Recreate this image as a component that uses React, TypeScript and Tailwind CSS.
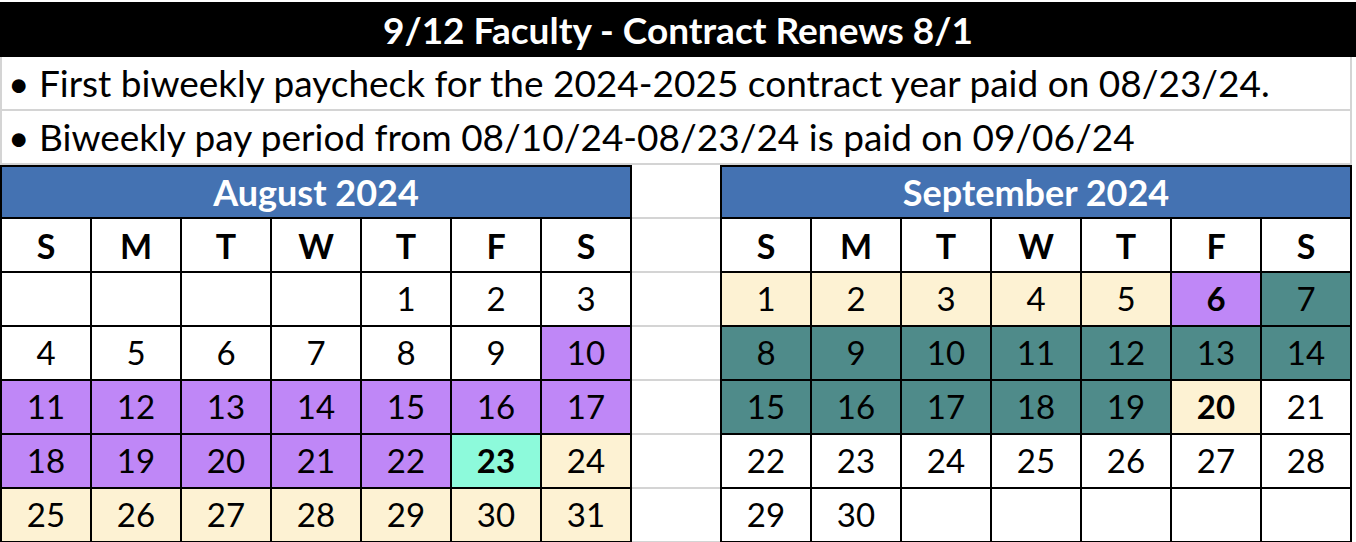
import React from "react";

type Day = { n: number | null; bg?: string; bold?: boolean };

const PURPLE = "bg-[#bf87f7]";
const CREAM = "bg-[#fdf2d3]";
const MINT = "bg-[#8dfadb]";
const TEAL = "bg-[#4f8b8a]";

const augustDays = (): Day[] => {
  const days: Day[] = [null, null, null, null].map(() => ({ n: null }));
  for (let d = 1; d <= 31; d++) {
    let bg: string | undefined;
    let bold = false;
    if (d >= 10 && d <= 22) bg = PURPLE;
    if (d === 23) {
      bg = MINT;
      bold = true;
    }
    if (d >= 24) bg = CREAM;
    days.push({ n: d, bg, bold });
  }
  return days;
};

const septemberDays = (): Day[] => {
  const days: Day[] = [];
  for (let d = 1; d <= 30; d++) {
    let bg: string | undefined;
    let bold = false;
    if (d <= 5) bg = CREAM;
    if (d === 6) {
      bg = PURPLE;
      bold = true;
    }
    if (d >= 7 && d <= 19) bg = TEAL;
    if (d === 20) {
      bg = CREAM;
      bold = true;
    }
    days.push({ n: d, bg, bold });
  }
  while (days.length < 35) days.push({ n: null });
  return days;
};

const weekdays = ["S", "M", "T", "W", "T", "F", "S"];

const Month = ({ title, days }: { title: string; days: Day[] }) => (
  <div className="w-[632px] shrink-0">
    <div className="h-[54px] bg-[#4472b2] border-2 border-black flex items-center justify-center text-white font-bold text-[36px]">
      {title}
    </div>
    <div className="grid grid-cols-[repeat(7,90px)] border-l-2 border-black">
      {weekdays.map((w, i) => (
        <div
          key={i}
          className="h-[54px] border-r-2 border-b-2 border-black flex items-center justify-center font-bold text-[34px]"
        >
          {w}
        </div>
      ))}
      {days.map((d, i) => (
        <div
          key={i}
          className={`h-[54px] border-r-2 border-b-2 border-black flex items-center justify-center text-[33px] ${
            d.bg ?? "bg-white"
          } ${d.bold ? "font-bold" : ""}`}
        >
          {d.n}
        </div>
      ))}
    </div>
  </div>
);

const GapColumn = () => (
  <div className="w-[88px] shrink-0 flex flex-col">
    {Array.from({ length: 7 }).map((_, i) => (
      <div key={i} className="h-[54px] border-b-2 border-[#d4d4d4]" />
    ))}
  </div>
);

export default function App() {
  return (
    <div
      className="w-[1356px] h-[542px] overflow-hidden bg-white text-black"
      style={{ fontFamily: "Lato, 'Open Sans', sans-serif" }}
    >
      <div className="h-[2px]" />
      <div className="h-[55px] bg-black flex items-center justify-center text-white font-bold text-[37px]">
        9/12 Faculty - Contract Renews 8/1
      </div>
      <div className="w-[1352px]">
        <div className="h-[54px] border-x-2 border-b-2 border-[#d4d4d4] flex items-center pl-[6px] text-[37px] whitespace-nowrap">
          <span className="w-[31px]">•</span>
          First biweekly paycheck for the 2024-2025 contract year paid on 08/23/24.
        </div>
        <div className="h-[54px] border-x-2 border-b-2 border-[#d4d4d4] flex items-center pl-[6px] text-[37px] whitespace-nowrap">
          <span className="w-[31px]">•</span>
          Biweekly pay period from 08/10/24-08/23/24 is paid on 09/06/24
        </div>
      </div>
      <div className="flex">
        <Month title="August 2024" days={augustDays()} />
        <GapColumn />
        <Month title="September 2024" days={septemberDays()} />
      </div>
    </div>
  );
}
